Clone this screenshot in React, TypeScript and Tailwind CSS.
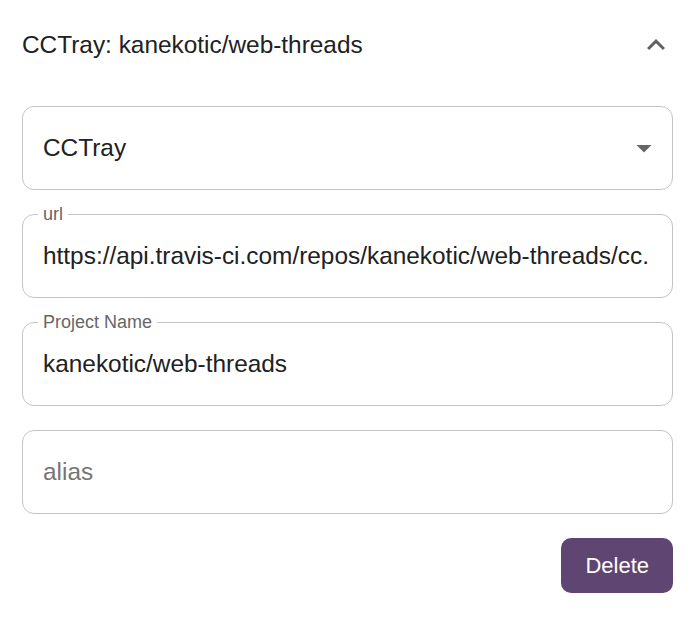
const font = { fontFamily: '"Liberation Sans", Arial, sans-serif' };

const Field = ({ label, value, placeholder }: { label?: string; value?: string; placeholder?: string }) => (
  <div className="relative h-[84px] rounded-[12px] border border-[#c4c4c4] flex items-center pl-[20px] pr-[8px]">
    {label && (
      <span className="absolute left-[15px] top-[-12px] bg-white px-[5px] text-[18px] leading-[22px] text-[#666666]">
        {label}
      </span>
    )}
    {value ? (
      <span className="text-[24.4px] text-[#212121] whitespace-nowrap">{value}</span>
    ) : (
      <span className="text-[24.4px] text-[#757575]">{placeholder}</span>
    )}
  </div>
);

export default function App() {
  return (
    <div className="w-[696px] h-[617px] bg-white pl-[22px] pr-[23px]" style={font}>
      <div className="h-[90px] flex items-center justify-between">
        <span className="text-[24.4px] text-[#212121]">CCTray: kanekotic/web-threads</span>
        <svg width="36" height="36" viewBox="0 0 24 24" className="mr-[-1px]" fill="#616161">
          <path d="M7.41 15.41 12 10.83l4.59 4.58L18 14l-6-6-6 6z" />
        </svg>
      </div>

      <div className="pt-[16px] flex flex-col gap-[24px]">
        <div className="relative h-[84px] rounded-[12px] border border-[#c4c4c4] flex items-center justify-between pl-[20px] pr-[10px]">
          <span className="text-[24.4px] text-[#212121]">CCTray</span>
          <svg width="36" height="36" viewBox="0 0 24 24" fill="#666666">
            <path d="M7 10l5 5 5-5z" />
          </svg>
        </div>
        <Field label="url" value="https://api.travis-ci.com/repos/kanekotic/web-threads/cc." />
        <Field label="Project Name" value="kanekotic/web-threads" />
        <Field placeholder="alias" />
        <div className="flex justify-end">
          <button className="h-[55px] px-[24px] rounded-[10px] bg-[#5f4571] text-white text-[22px]">
            Delete
          </button>
        </div>
      </div>
    </div>
  );
}
